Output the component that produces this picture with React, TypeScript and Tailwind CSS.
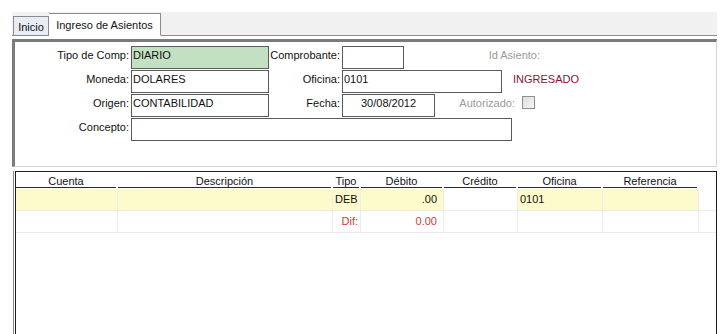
import React from 'react'

const font = { fontFamily: '"Liberation Sans", Arial, sans-serif' }

type Col = { key: string; title: string; w: string }

const cols: Col[] = [
  { key: 'cuenta', title: 'Cuenta', w: 'w-[102px]' },
  { key: 'desc', title: 'Descripción', w: 'w-[215px]' },
  { key: 'tipo', title: 'Tipo', w: 'w-[28px]' },
  { key: 'debito', title: 'Débito', w: 'w-[83px]' },
  { key: 'credito', title: 'Crédito', w: 'w-[74px]' },
  { key: 'oficina', title: 'Oficina', w: 'w-[85px]' },
  { key: 'ref', title: 'Referencia', w: 'w-[96px]' },
]

function Label({ text, w, muted }: { text: string; w: string; muted?: boolean }) {
  return (
    <div className={`${w} shrink-0 pt-[2px] pr-[2px] text-right ${muted ? 'text-[#9a9a9a]' : 'text-[#111]'}`}>
      {text}
    </div>
  )
}

function Field({ value, w, green, center }: { value?: string; w: string; green?: boolean; center?: boolean }) {
  return (
    <div
      className={`${w} h-[23px] shrink-0 border border-[#5a5a5a] px-[1px] pt-[1px] leading-[14px] text-[#111] ${
        green ? 'bg-[#c3e0c3]' : 'bg-white'
      } ${center ? 'text-center' : ''}`}
    >
      {value}
    </div>
  )
}

export default function App() {
  return (
    <div className="h-[334px] w-[727px] overflow-hidden bg-white text-[11px] leading-[14px]" style={font}>
      <div className="ml-[12px] w-[705px] pt-[12px]">
        {/* tabs */}
        <div className="flex h-[24px] items-end border-b border-[#8c8c8c] bg-[#f1f1f1] pl-[1px]">
          <div className="-mb-px flex h-[20px] w-[36px] items-center justify-center border border-[#8c8c8c] bg-[#e8ecf5] pt-[2px] text-[#111]">
            Inicio
          </div>
          <div className="-mb-px flex h-[23px] w-[112px] items-center justify-center border border-b-white border-l-0 border-[#8c8c8c] bg-white pt-[1px] text-[#111]">
            Ingreso de Asientos
          </div>
        </div>

        {/* header form */}
        <div className="mt-[3px] h-[128px] border-b border-r border-l-[3px] border-t-[3px] border-b-[#d6d6d6] border-l-[#7b7b7b] border-r-[#d6d6d6] border-t-[#7b7b7b] bg-white pt-[4px]">
          <div className="flex flex-col gap-[1px]">
            <div className="flex">
              <Label text="Tipo de Comp:" w="w-[116px]" />
              <Field value="DIARIO" w="w-[138px]" green />
              <Label text="Comprobante:" w="w-[73px]" />
              <Field w="w-[62px]" />
              <Label text="Id Asiento:" w="w-[138px]" muted />
            </div>
            <div className="flex">
              <Label text="Moneda:" w="w-[116px]" />
              <Field value="DOLARES" w="w-[138px]" />
              <Label text="Oficina:" w="w-[73px]" />
              <Field value="0101" w="w-[160px]" />
              <div className="pl-[11px] pt-[2px] text-[#8e1230]">INGRESADO</div>
            </div>
            <div className="flex">
              <Label text="Origen:" w="w-[116px]" />
              <Field value="CONTABILIDAD" w="w-[138px]" />
              <Label text="Fecha:" w="w-[73px]" />
              <Field value="30/08/2012" w="w-[93px]" center />
              <Label text="Autorizado:" w="w-[82px]" muted />
              <div className="ml-[5px] mt-[2px] h-[13px] w-[13px] border border-[#8f8f8f] bg-gradient-to-br from-[#dcdcdc] to-[#f7f7f7]" />
            </div>
            <div className="flex">
              <Label text="Concepto:" w="w-[116px]" />
              <Field w="w-[381px]" />
            </div>
          </div>
        </div>

        {/* grid */}
        <div className="ml-[1px] mt-[4px] h-[170px] w-[704px] border-l border-[#8a8a8a] pl-[1px]">
          <div className="h-full w-[702px] border border-[#1e1e1e] bg-white">
            <div className="flex h-[17px]">
              {cols.map((c) => (
                <div key={c.key} className={`${c.w} shrink-0 pr-[2px]`}>
                  <div className="h-[16px] border-b border-[#2a2a2a] pt-[2px] text-center text-[#111]">{c.title}</div>
                </div>
              ))}
            </div>
            <div className="flex h-[22px] border-b border-[#ececec]">
              {cols.map((c) => (
                <div
                  key={c.key}
                  className={`${c.w} shrink-0 border-r border-[#ececec] px-[2px] leading-[20px] text-[#111] ${
                    c.key === 'credito' ? 'bg-white' : 'bg-[#fdfacb]'
                  } ${c.key === 'debito' ? 'pr-[6px] text-right' : ''}`}
                >
                  {c.key === 'tipo' ? 'DEB' : c.key === 'debito' ? '.00' : c.key === 'oficina' ? '0101' : ''}
                </div>
              ))}
            </div>
            <div className="flex h-[22px] border-b border-[#ececec]">
              {cols.map((c) => (
                <div
                  key={c.key}
                  className={`${c.w} shrink-0 border-r border-[#ececec] px-[2px] leading-[20px] text-[#d23a3a] ${
                    c.key === 'debito' ? 'pr-[6px] text-right' : c.key === 'tipo' ? 'text-right' : ''
                  }`}
                >
                  {c.key === 'tipo' ? 'Dif:' : c.key === 'debito' ? '0.00' : ''}
                </div>
              ))}
            </div>
          </div>
        </div>
      </div>
    </div>
  )
}
